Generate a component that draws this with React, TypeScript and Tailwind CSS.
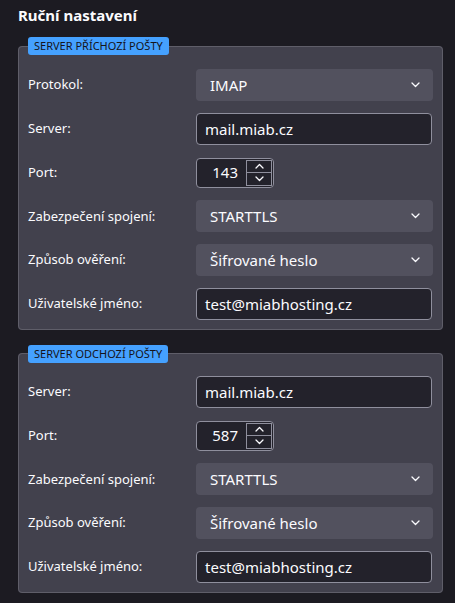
import React from 'react';

type Field =
  | { kind: 'select'; label: string; value: string }
  | { kind: 'text'; label: string; value: string }
  | { kind: 'port'; label: string; value: string };

const incoming: Field[] = [
  { kind: 'select', label: 'Protokol:', value: 'IMAP' },
  { kind: 'text', label: 'Server:', value: 'mail.miab.cz' },
  { kind: 'port', label: 'Port:', value: '143' },
  { kind: 'select', label: 'Zabezpečení spojení:', value: 'STARTTLS' },
  { kind: 'select', label: 'Způsob ověření:', value: 'Šifrované heslo' },
  { kind: 'text', label: 'Uživatelské jméno:', value: 'test@miabhosting.cz' },
];

const outgoing: Field[] = [
  { kind: 'text', label: 'Server:', value: 'mail.miab.cz' },
  { kind: 'port', label: 'Port:', value: '587' },
  { kind: 'select', label: 'Zabezpečení spojení:', value: 'STARTTLS' },
  { kind: 'select', label: 'Způsob ověření:', value: 'Šifrované heslo' },
  { kind: 'text', label: 'Uživatelské jméno:', value: 'test@miabhosting.cz' },
];

const Chevron = ({ up = false }: { up?: boolean }) => (
  <svg width="9" height="6" viewBox="0 0 9 6">
    <path
      d={up ? 'M1 5 L4.5 1.5 L8 5' : 'M1 1 L4.5 4.5 L8 1'}
      fill="none"
      stroke="#fbfbfe"
      strokeWidth="1.3"
      strokeLinecap="round"
      strokeLinejoin="round"
    />
  </svg>
);

const Control = ({ field }: { field: Field }) => {
  if (field.kind === 'select') {
    return (
      <div className="flex h-8 w-[237px] items-center justify-between rounded-[4px] bg-[#52515e] pl-[14px] pr-[13px] text-[15px] text-[#fbfbfe]">
        <span>{field.value}</span>
        <Chevron />
      </div>
    );
  }
  if (field.kind === 'port') {
    return (
      <div className="flex h-[30px] w-[78px] items-center rounded-[4px] border border-[#8f8f9d] bg-[#23222b] pr-[1px] text-[15px] text-[#fbfbfe]">
        <span className="w-[41px] text-right">{field.value}</span>
        <div className="ml-auto flex h-[26px] w-[26px] flex-col border border-[#8f8f9d]">
          <div className="flex flex-1 items-center justify-center border-b border-[#8f8f9d]">
            <Chevron up />
          </div>
          <div className="flex flex-1 items-center justify-center">
            <Chevron />
          </div>
        </div>
      </div>
    );
  }
  return (
    <div className="flex h-8 w-[236px] items-center rounded-[4px] border border-[#8f8f9d] bg-[#23222b] px-2 text-[15px] text-[#fbfbfe]">
      {field.value}
    </div>
  );
};

const ServerBox = ({
  title,
  fields,
  className = '',
  bodyClass = '',
}: {
  title: string;
  fields: Field[];
  className?: string;
  bodyClass?: string;
}) => (
  <fieldset className={`rounded-[4px] border border-[#5f5e69] bg-[#42414d] pb-[9px] pl-[9px] pr-[9px] ${className}`}>
    <legend className="rounded-[3px] bg-[#45a1ff] px-[6px] text-[11px] leading-[18px] text-[#15141a]">
      {title}
    </legend>
    <div className={`flex flex-col gap-[11.75px] ${bodyClass}`}>
      {fields.map((f, i) => (
        <div key={i} className="flex h-8 items-center">
          <div className="w-[168px] text-[13px] text-[#fbfbfe]">{f.label}</div>
          <Control field={f} />
        </div>
      ))}
    </div>
  </fieldset>
);

export default function App() {
  return (
    <div
      className="h-[603px] w-[455px] bg-[#1c1b22] pl-[18px] pr-[12px] pt-[5px]"
      style={{ fontFamily: '"Noto Sans", "Open Sans", sans-serif' }}
    >
      <h2 className="text-[15px] font-bold leading-5 text-[#fbfbfe]">Ruční nastavení</h2>
      <ServerBox title="SERVER PŘÍCHOZÍ POŠTY" fields={incoming} className="mt-[12px]" bodyClass="mt-[14px]" />
      <ServerBox title="SERVER ODCHOZÍ POŠTY" fields={outgoing} className="mt-[15px]" bodyClass="mt-[13px]" />
    </div>
  );
}
